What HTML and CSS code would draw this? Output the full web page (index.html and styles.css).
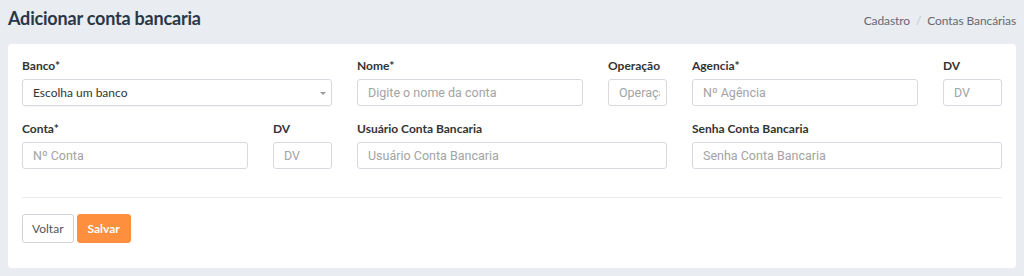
FILE: index.html
```
<!DOCTYPE html>
<html lang="pt-BR">
<head>
    <meta charset="UTF-8">
    <meta name="viewport" content="width=device-width, initial-scale=1.0">
    <title>Adicionar conta bancaria</title>
    <link rel="stylesheet" href="styles.css">
</head>
<body>

    <!-- Page header -->
    <div class="page-header">
        <h1>Adicionar conta bancaria</h1>
        <ol class="breadcrumb">
            <li>Cadastro</li>
            <li class="sep">/</li>
            <li>Contas Bancárias</li>
        </ol>
    </div>

    <div class="card">
        <form class="form-grid">
            <!-- Row 1 -->
            <div class="field">
                <label>Banco*</label>
                <div class="select">
                    <span>Escolha um banco</span>
                </div>
            </div>
            <div class="pair">
                <div class="field">
                    <label>Nome*</label>
                    <input type="text" placeholder="Digite o nome da conta">
                </div>
                <div class="field">
                    <label>Operação</label>
                    <input type="text" placeholder="Operação">
                </div>
            </div>
            <div class="pair">
                <div class="field">
                    <label>Agencia*</label>
                    <input type="text" placeholder="Nº Agência">
                </div>
                <div class="field">
                    <label>DV</label>
                    <input type="text" placeholder="DV">
                </div>
            </div>

            <!-- Row 2 -->
            <div class="pair">
                <div class="field">
                    <label>Conta*</label>
                    <input type="text" placeholder="Nº Conta">
                </div>
                <div class="field">
                    <label>DV</label>
                    <input type="text" placeholder="DV">
                </div>
            </div>
            <div class="field">
                <label>Usuário Conta Bancaria</label>
                <input type="text" placeholder="Usuário Conta Bancaria">
            </div>
            <div class="field">
                <label>Senha Conta Bancaria</label>
                <input type="text" placeholder="Senha Conta Bancaria">
            </div>
        </form>

        <hr class="divider">

        <div class="actions">
            <button class="btn btn-default">Voltar</button>
            <button class="btn btn-primary">Salvar</button>
        </div>
    </div>

</body>
</html>
```

FILE: styles.css
```
/* General */
:root {
    --page-bg: #e9ecf1;
    --card-bg: #ffffff;
    --title-color: #2a3846;
    --text-color: #333333;
    --muted: #666a70;
    --placeholder: #a3a3a3;
    --border: #d6d9de;
    --orange: #fd8f3e;
}

body {
    margin: 0;
    padding: 0 8px;
    background-color: var(--page-bg);
    font-family: Lato, 'Open Sans', sans-serif;
    color: var(--text-color);
}

/* Header */
.page-header {
    display: flex;
    justify-content: space-between;
    align-items: center;
    height: 36px;
    padding-bottom: 8px;
}

.page-header h1 {
    margin: 0;
    font-size: 18px;
    font-weight: 700;
    color: var(--title-color);
    letter-spacing: -0.2px;
}

.breadcrumb {
    display: flex;
    list-style: none;
    margin: 4px 0 0;
    padding: 0;
    font-size: 12px;
    color: var(--muted);
    letter-spacing: -0.1px;
}

.breadcrumb .sep {
    color: #c4c7cc;
    padding: 0 6px;
}

/* Card */
.card {
    background-color: var(--card-bg);
    border-radius: 4px;
    padding: 14px 14px 25px;
}

.form-grid {
    display: grid;
    grid-template-columns: repeat(3, 1fr);
    column-gap: 25px;
    row-gap: 15px;
}

.pair {
    display: grid;
    grid-template-columns: 1fr 59px;
    column-gap: 25px;
}

.field {
    display: flex;
    flex-direction: column;
    min-width: 0;
}

.field label {
    font-size: 12px;
    font-weight: 700;
    line-height: 15px;
    color: var(--text-color);
    margin-bottom: 6px;
}

.field input,
.select {
    box-sizing: border-box;
    height: 27px;
    width: 100%;
    border: 1px solid var(--border);
    border-radius: 3px;
    padding: 0 6px 0 10px;
    font-family: Roboto, 'Liberation Sans', sans-serif;
    font-size: 12.5px;
    color: var(--text-color);
    outline: none;
}

.field input::placeholder {
    color: var(--placeholder);
}

.select {
    display: flex;
    align-items: center;
    position: relative;
    font-family: Lato, 'Open Sans', sans-serif;
    font-size: 12px;
    box-shadow: 0 1px 1px rgba(0, 0, 0, 0.04);
}

.select::after {
    content: "";
    position: absolute;
    right: 5px;
    top: 12px;
    border-left: 3px solid transparent;
    border-right: 3px solid transparent;
    border-top: 3px solid #999;
}

/* Footer of card */
.divider {
    border: none;
    border-top: 1px solid #e8eaed;
    margin: 28px 0 16px;
}

.actions {
    display: flex;
    gap: 3px;
}

.btn {
    height: 29px;
    padding: 0 9px;
    border-radius: 3px;
    font-family: Lato, 'Open Sans', sans-serif;
    font-size: 12px;
    cursor: pointer;
}

.btn-default {
    background-color: #fff;
    border: 1px solid #cfd2d6;
    color: #555;
}

.btn-primary {
    background-color: var(--orange);
    border: 1px solid var(--orange);
    color: #fff;
    font-weight: 700;
    padding: 0 10px;
}
```
